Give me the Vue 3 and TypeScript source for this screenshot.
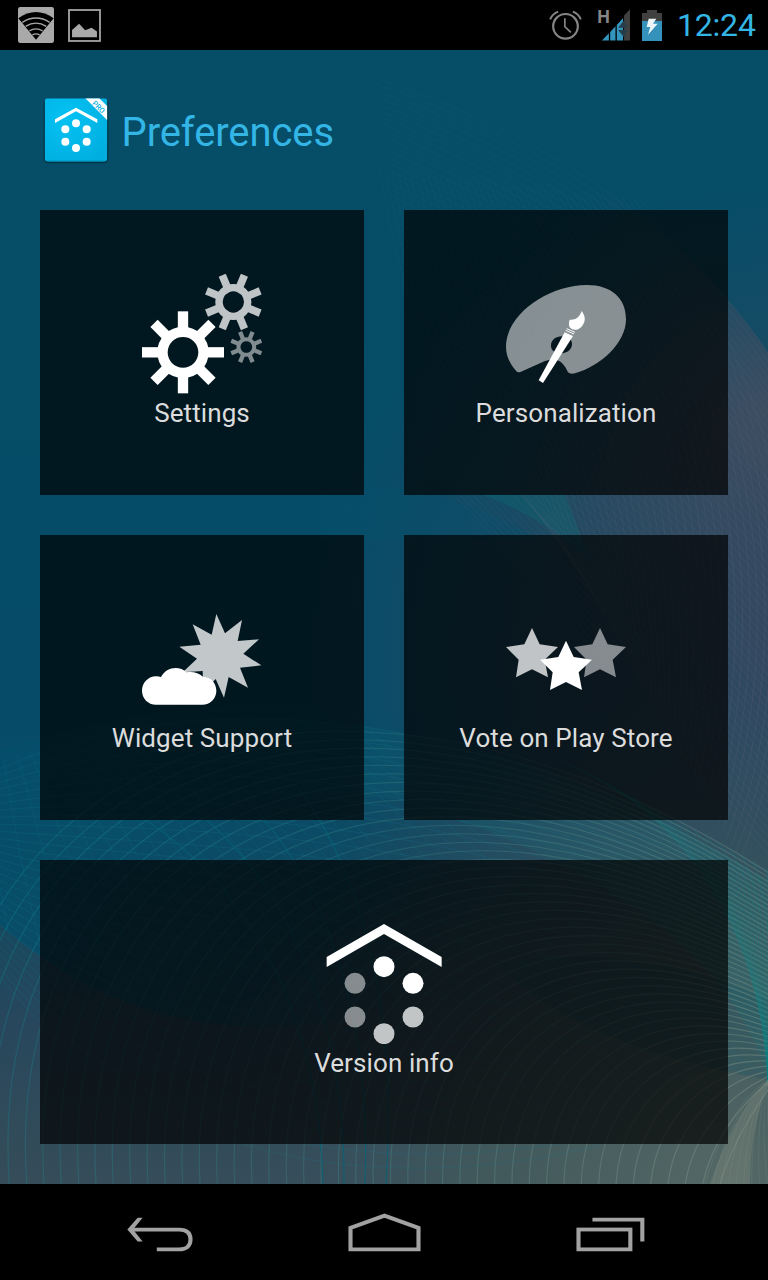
<script setup lang="ts">
type Curve = [number, number, number, number, number, number, number, number]

interface Tile {
  id: 'settings' | 'personalization' | 'widgets' | 'vote' | 'version'
  label: string
}

const tiles: Tile[] = [
  { id: 'settings', label: 'Settings' },
  { id: 'personalization', label: 'Personalization' },
  { id: 'widgets', label: 'Widget Support' },
  { id: 'vote', label: 'Vote on Play Store' },
  { id: 'version', label: 'Version info' },
]

const gears = [
  { x: 159, y: 277, reach: 123, ring: 61.5, stroke: 31, tooth: 31, turn: 0, shade: 1 },
  { x: 310, y: 126, reach: 87, ring: 43, stroke: 22, tooth: 23, turn: 22.5, shade: 0.75 },
  { x: 349, y: 261, reach: 49, ring: 23.5, stroke: 12, tooth: 13, turn: 22.5, shade: 0.5 },
]
const teeth = [0, 45, 90, 135, 180, 225, 270, 315]

const star = '348,92 371,141 426,149 386,187 396,240 348,216 300,240 308,187 270,149 325,141'

const dots = [
  { x: 252, y: 170, shade: 1 },
  { x: 339, y: 220, shade: 1 },
  { x: 339, y: 321, shade: 0.75 },
  { x: 252, y: 371, shade: 0.75 },
  { x: 165, y: 321, shade: 0.5 },
  { x: 165, y: 220, shade: 0.5 },
]

// Blends one cubic curve into another and joins all the steps in one path.
function weave(a: Curve, b: Curve, count: number): string {
  let d = ''
  for (let i = 0; i < count; i++) {
    const t = i / (count - 1)
    const p = a.map((v, k) => (v + (b[k] - v) * t).toFixed(1))
    d += `M${p[0]} ${p[1]}C${p[2]} ${p[3]} ${p[4]} ${p[5]} ${p[6]} ${p[7]}`
  }
  return d
}

const arcs = weave([-60, 1184, -90, 760, 320, 580, 780, 880], [720, 1184, 730, 1150, 750, 1115, 772, 1084], 46)
const mesh = weave([-60, 800, 120, 690, 420, 670, 780, 880], [-60, 880, 100, 1200, 420, 1190, 600, 1145], 30)
const crossing = weave([-10, 760, -10, 800, -10, 850, 10, 940], [330, 710, 500, 800, 700, 1060, 780, 1080], 26)
const rose = weave([380, 80, 540, 130, 710, 240, 790, 390], [420, 460, 560, 600, 700, 780, 800, 890], 60)
const roseCross = weave([380, 170, 400, 300, 440, 420, 560, 535], [640, 200, 790, 380, 830, 640, 740, 860], 44)
const shadowLines = weave([130, 810, 280, 900, 320, 1060, 323, 1184], [300, 790, 380, 900, 395, 1060, 386, 1184], 4)
const fan = weave([768, 1080, 735, 1100, 715, 1150, 705, 1184], [768, 1084, 765, 1110, 770, 1150, 775, 1184], 10)
const rightTeal = weave([560, 760, 680, 810, 760, 920, 768, 1082], [790, 880, 785, 920, 780, 1000, 768, 1082], 20)
</script>

<template>
  <main class="phone">
    <header class="status">
      <svg class="s-wifi" viewBox="54 21 108 108">
        <rect x="54" y="21" width="108" height="108" rx="7" fill="#a9a9a9" />
        <path d="M55 55Q108 17 161 55L108 119Z" fill="#000" />
        <path d="M67 67Q108 41 149 67M77 79Q108 60 139 79M88 93Q108 80 128 93M97 105Q108 98 119 105" fill="none" stroke="#a9a9a9" stroke-width="4" />
      </svg>
      <svg class="s-pic" viewBox="203 27 98 98">
        <rect x="206" y="30" width="92" height="92" fill="none" stroke="#a0a0a0" stroke-width="5.5" />
        <path d="M215 89L236 71L254 90L273 83L289 94V111H215Z" fill="#a9a9a9" />
      </svg>
      <div class="status-right">
        <svg class="s-alarm" viewBox="56 30 98 93" fill="none" stroke="#858585">
          <circle cx="105" cy="79" r="37" stroke-width="6.5" />
          <path d="M103 55V80L121 97" stroke-width="5" />
          <path d="M59 58Q66 41 83 35M151 58Q144 41 127 35" stroke-width="6" />
        </svg>
        <svg class="s-signal" viewBox="200 27 100 96">
          <text x="201" y="70" class="net">H</text>
          <path d="M282 46L300 27V122H282Z" fill="#404040" />
          <path d="M215 122L236 100V122ZM240 96L256 79V122H240ZM260 75L279 54V122H260Z" fill="#3296be" />
          <path d="M264 83L281 62L294 83ZM264 90H294L281 111Z" fill="#263e49" />
        </svg>
        <svg class="s-battery" viewBox="336 27 60 93">
          <path d="M351 27H381V36H396V60H336V36H351Z" fill="#404040" />
          <rect x="336" y="60" width="60" height="60" fill="#3492bb" />
          <path d="M356 53H379L369 68H383L354 101L361 78H350Z" fill="#eef5f8" />
        </svg>
        <span class="clock">12:24</span>
      </div>
    </header>

    <section class="screen">
      <svg class="wallpaper" viewBox="0 50 768 1134" preserveAspectRatio="none" fill="none">
        <defs>
          <linearGradient id="base" x1="0" y1="0" x2="0" y2="1">
            <stop offset="0" stop-color="#064d67" />
            <stop offset="0.6" stop-color="#064c69" />
            <stop offset="0.74" stop-color="#12485f" />
            <stop offset="0.86" stop-color="#28475c" />
            <stop offset="1" stop-color="#364d59" />
          </linearGradient>
          <radialGradient id="violet" gradientUnits="userSpaceOnUse" cx="790" cy="660" r="480">
            <stop offset="0" stop-color="#364860" stop-opacity="0.95" />
            <stop offset="0.5" stop-color="#2c485f" stop-opacity="0.7" />
            <stop offset="1" stop-color="#224a62" stop-opacity="0" />
          </radialGradient>
          <radialGradient id="moss" gradientUnits="userSpaceOnUse" cx="730" cy="1190" r="520">
            <stop offset="0" stop-color="#566b67" stop-opacity="0.95" />
            <stop offset="0.5" stop-color="#445b5c" stop-opacity="0.75" />
            <stop offset="1" stop-color="#364f60" stop-opacity="0" />
          </radialGradient>
          <linearGradient id="arcInk" gradientUnits="userSpaceOnUse" x1="0" y1="800" x2="700" y2="1184">
            <stop offset="0" stop-color="#087b8b" stop-opacity="0.45" />
            <stop offset="0.5" stop-color="#34787c" stop-opacity="0.45" />
            <stop offset="1" stop-color="#7d9082" stop-opacity="0.5" />
          </linearGradient>
          <linearGradient id="roseInk" gradientUnits="userSpaceOnUse" x1="420" y1="200" x2="768" y2="560">
            <stop offset="0" stop-color="#24647a" stop-opacity="0.16" />
            <stop offset="1" stop-color="#6a6676" stop-opacity="0.24" />
          </linearGradient>
          <radialGradient id="roseFill" gradientUnits="userSpaceOnUse" cx="765" cy="410" r="270">
            <stop offset="0" stop-color="#5c5160" stop-opacity="0.5" />
            <stop offset="1" stop-color="#4a4a5c" stop-opacity="0" />
          </radialGradient>
          <linearGradient id="tealFill" gradientUnits="userSpaceOnUse" x1="0" y1="0" x2="768" y2="0">
            <stop offset="0" stop-color="#07727d" stop-opacity="0" />
            <stop offset="0.5" stop-color="#07727d" stop-opacity="0.12" />
            <stop offset="1" stop-color="#168084" stop-opacity="0.22" />
          </linearGradient>
          <linearGradient id="leftFill" gradientUnits="userSpaceOnUse" x1="0" y1="0" x2="420" y2="0">
            <stop offset="0" stop-color="#044e6b" stop-opacity="0.8" />
            <stop offset="1" stop-color="#044e6b" stop-opacity="0" />
          </linearGradient>
        </defs>
        <rect y="50" width="768" height="1134" fill="url(#base)" />
        <rect y="50" width="768" height="1134" fill="url(#violet)" />
        <rect y="50" width="768" height="1134" fill="url(#moss)" />
        <path d="M0 750Q220 680 420 720V1000Q180 1080 0 925Z" fill="url(#leftFill)" />
        <path d="M380 80C540 130 710 240 790 390V860H400Z" fill="url(#roseFill)" />
        <path d="M480 494L565 495L590 560Q540 515 480 494Z" fill="#087078" opacity="0.3" />
        <path d="M320 489Q430 475 540 540H320Z" fill="#05506c" opacity="0.35" />
        <path d="M0 745Q400 650 768 880V1080Q720 900 400 800Q200 770 0 900Z" fill="url(#tealFill)" />
        <path :d="rose" stroke="url(#roseInk)" stroke-width="0.8" />
        <path :d="roseCross" stroke="url(#roseInk)" stroke-width="0.8" />
        <path :d="mesh" stroke="#15758a" stroke-opacity="0.3" stroke-width="0.8" />
        <path :d="crossing" stroke="#087a92" stroke-opacity="0.25" stroke-width="0.8" />
        <path d="M500 963Q560 1040 768 1080V1000Q640 940 500 963Z" fill="#064d5e" opacity="0.2" />
        <path :d="arcs" stroke="url(#arcInk)" stroke-width="1.1" />
        <path :d="rightTeal" stroke="#0b8787" stroke-opacity="0.28" />
        <path :d="shadowLines" stroke="#056378" stroke-opacity="0.7" stroke-width="1.3" />
        <path d="M768 1080Q735 1110 710 1184H750Q750 1130 768 1085Z" fill="#8b8f82" opacity="0.3" />
        <path :d="fan" stroke="#8aa095" stroke-opacity="0.16" />
      </svg>

      <div class="title">
        <svg class="app-icon" viewBox="126 288 204 207">
          <defs>
            <radialGradient id="sky" cx="0.35" cy="0.3" r="0.8">
              <stop offset="0" stop-color="#04c2f3" />
              <stop offset="1" stop-color="#00afe0" />
            </radialGradient>
            <clipPath id="tileClip"><rect x="134" y="295" width="188" height="190" rx="10" /></clipPath>
          </defs>
          <rect x="131" y="297" width="194" height="193" rx="13" fill="#022b3b" opacity="0.7" />
          <g clip-path="url(#tileClip)">
            <rect x="134" y="295" width="188" height="190" fill="url(#sky)" />
            <path d="M256 295H298L322 319V361Z" fill="#fff" />
            <path d="M134 483.500H322" stroke="#0587ab" stroke-width="3" />
          </g>
          <text class="pro" transform="translate(275 311) rotate(45)">PRO</text>
          <path d="M228 323L292 358V369L228 334L165 369V358Z" fill="#fff" />
          <g fill="#fff">
            <circle cx="228" cy="370" r="12" /><circle cx="260" cy="388" r="12" />
            <circle cx="260" cy="425" r="12" /><circle cx="228" cy="444" r="12" />
            <circle cx="196" cy="425" r="12" /><circle cx="196" cy="388" r="12" />
          </g>
        </svg>
        <h1>Preferences</h1>
      </div>

      <div class="grid">
        <button v-for="tile in tiles" :key="tile.id" class="tile" :class="tile.id" type="button">
          <svg v-if="tile.id === 'settings'" class="glyph" viewBox="36 42 360 360">
            <g v-for="g in gears" :key="g.x" :transform="`translate(${g.x} ${g.y}) rotate(${g.turn})`" :opacity="g.shade">
              <circle :r="g.ring" fill="none" stroke="#fff" :stroke-width="g.stroke" />
              <rect
                v-for="a in teeth"
                :key="a"
                :x="-g.tooth / 2"
                :y="-g.reach"
                :width="g.tooth"
                :height="g.reach - g.ring"
                :transform="`rotate(${a})`"
                fill="#fff"
              />
            </g>
          </svg>
          <svg v-else-if="tile.id === 'personalization'" class="glyph" viewBox="138 12 360 360">
            <path
              fill="#fff"
              fill-opacity="0.52"
              fill-rule="evenodd"
              d="M138 230C138 130 270 45 380 45C455 45 498 85 498 148C498 220 420 290 345 310Q327 314 322 303C308 270 285 262 255 273L183 305Q172 310 166 300C150 280 138 258 138 230ZM273 227C273 210 287 199 306 199C325 199 336 208 336 222C336 238 322 250 303 250C285 250 273 241 273 227Z"
            />
            <path d="M314 187L339 198L249 339L236 331Z" fill="#fff" />
            <path d="M317 181L342 192M320 176L345 187" stroke="#fff" stroke-width="3" />
            <path d="M365 123C377 139 377 153 367 167C357 181 340 184 329 172C325 164 327 156 329 149C346 151 359 142 365 123Z" fill="#fff" />
          </svg>
          <svg v-else-if="tile.id === 'widgets'" class="glyph" viewBox="126 -3 360 360">
            <path
              fill="#fff"
              fill-opacity="0.76"
              d="M349 42L375 100L426 60L413 123L477 118L430 161L484 196L420 203L444 263L386 231L372 293L347 237L310 275L308 213L248 217L291 176L238 140L302 134L278 73L335 104Z"
            />
            <path
              fill="#fff"
              d="M168 314C144 314 126 295 126 272C126 247 146 228 170 229Q176 229 183 231C198 201 237 195 260 217C279 214 297 219 309 230C333 231 349 249 349 272C349 296 330 314 307 314Z"
            />
          </svg>
          <svg v-else-if="tile.id === 'vote'" class="glyph" viewBox="168 -33 360 360" fill="#fff">
            <polygon :points="star" transform="translate(-102 -38)" opacity="0.75" />
            <polygon :points="star" transform="translate(102 -38)" opacity="0.5" />
            <polygon :points="star" />
          </svg>
          <svg v-else class="glyph" viewBox="72 42 360 360" fill="#fff">
            <path d="M252 42L425 141V171L252 72L80 171V141Z" />
            <circle v-for="(d, i) in dots" :key="i" :cx="d.x" :cy="d.y" r="31.500" :opacity="d.shade" />
          </svg>
          <span class="label">{{ tile.label }}</span>
        </button>
      </div>
    </section>

    <nav class="nav">
      <svg class="n-back" preserveAspectRatio="none" viewBox="75 70 186 118" fill="none" stroke="#a2a2a2">
        <path d="M90 120H222C243 120 254 130 254 150C254 169 243 180 222 180H159" stroke-width="11.500" />
        <path d="M105 84H119L92 120L119 156H105L76 120Z" fill="#a2a2a2" stroke="none" />
      </svg>
      <svg class="n-home" preserveAspectRatio="none" viewBox="693 70 204 118" fill="none" stroke="#a2a2a2" stroke-width="11.500">
        <path d="M700 180V115L795 78L890 115V180Z" />
      </svg>
      <svg class="n-recent" preserveAspectRatio="none" viewBox="1332 70 193 118" fill="none" stroke="#a2a2a2" stroke-width="11.500">
        <rect x="1339" y="120" width="145" height="60" />
        <path d="M1378 90H1517.500V156" />
      </svg>
    </nav>
  </main>
</template>

<style>
html,
body {
  margin: 0;
  background: #000;
}
</style>

<style scoped>
.phone {
  display: flex;
  flex-direction: column;
  width: 768px;
  height: 1280px;
  overflow: hidden;
  background: #000;
  font-family: Roboto, 'Noto Sans', sans-serif;
}
svg {
  display: block;
  flex: none;
}
.status {
  display: flex;
  align-items: center;
  height: 50px;
  padding: 0 12px 0 18px;
  box-sizing: border-box;
  flex: none;
}
.s-wifi { width: 36px; height: 36px; }
.s-pic { width: 33px; height: 33px; margin-left: 14px; }
.status-right {
  display: flex;
  align-items: center;
  margin-left: auto;
}
.s-alarm { width: 33px; height: 31px; }
.s-signal { width: 33px; height: 32px; margin-left: 15px; overflow: visible; }
.s-battery { width: 20px; height: 31px; margin-left: 12px; }
.net {
  font: 700 54px Roboto, sans-serif;
  fill: #858585;
}
.clock {
  width: 79px;
  margin-left: 15px;
  color: #33b5e5;
  font-size: 32px;
  line-height: 52px;
  letter-spacing: -0.2px;
  white-space: nowrap;
}
.screen {
  position: relative;
  height: 1134px;
  flex: none;
  overflow: hidden;
}
.wallpaper {
  position: absolute;
  inset: 0;
  width: 768px;
  height: 1134px;
}
.title {
  position: relative;
  display: flex;
  align-items: center;
  height: 160px;
  padding-left: 42px;
  box-sizing: border-box;
}
.app-icon { width: 68px; height: 69px; }
.pro {
  font: 500 22px Roboto, sans-serif;
  fill: #00afe0;
}
h1 {
  margin: 6px 0 0 11.5px;
  color: #33b5e5;
  font-size: 40px;
  font-weight: 400;
  line-height: 48px;
  letter-spacing: -0.1px;
}
.grid {
  position: relative;
  display: grid;
  grid-template-columns: 324px 324px;
  grid-template-rows: 285px 285px 284px;
  gap: 40px;
  padding: 0 40px;
}
.tile {
  display: flex;
  flex-direction: column;
  align-items: center;
  padding: 64px 0 0;
  border: 0;
  background: rgba(0, 0, 0, 0.69);
  color: #dcdcdc;
  font-family: inherit;
}
.version { grid-column: 1 / 3; }
.glyph { width: 120px; height: 120px; }
.label {
  margin-top: 1px;
  font-size: 26px;
  line-height: 36px;
  letter-spacing: 0.1px;
  white-space: nowrap;
}
.nav {
  display: flex;
  align-items: center;
  height: 96px;
  padding: 0 123.5px 0 126.5px;
  box-sizing: border-box;
  justify-content: space-between;
  flex: none;
}
.n-back { width: 66px; height: 39px; }
.n-home { width: 73px; height: 39px; }
.n-recent { width: 69px; height: 39px; }
</style>
